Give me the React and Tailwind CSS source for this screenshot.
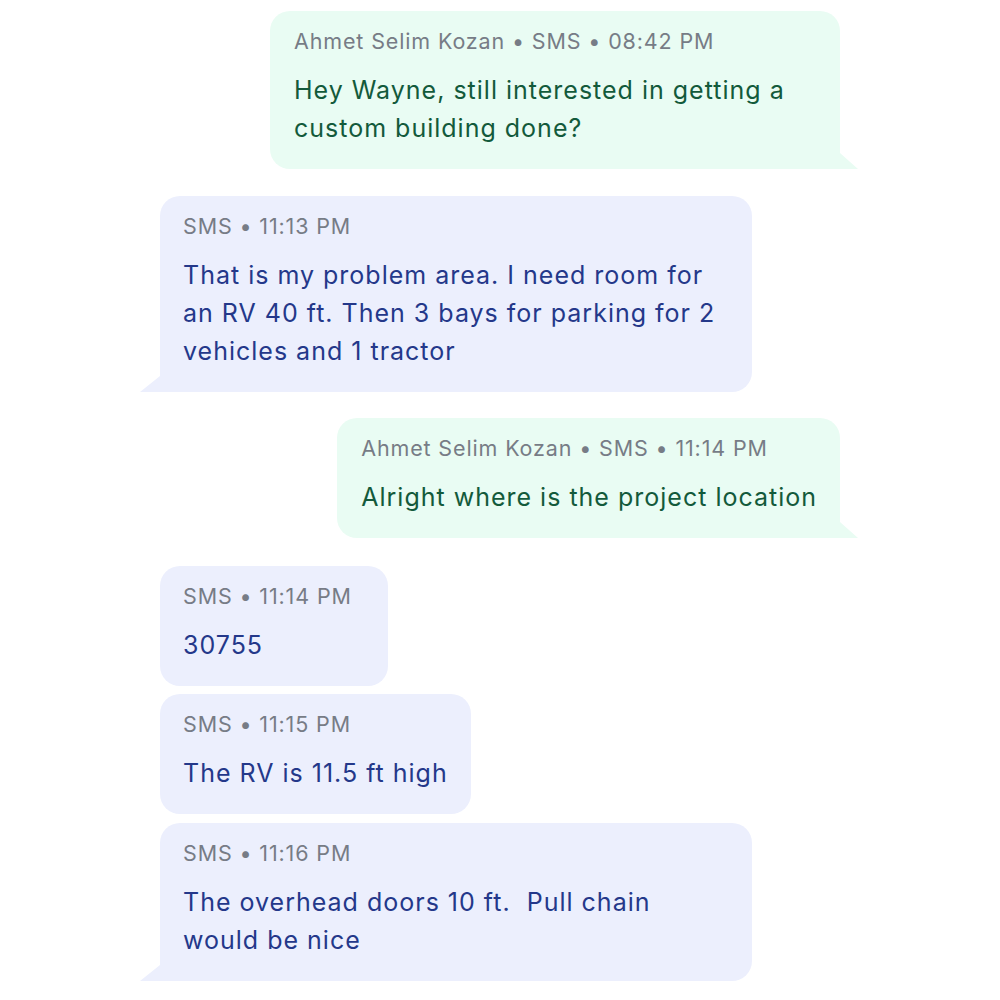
import React from 'react';

const messages = [
  { id: 1, out: true, meta: 'Ahmet Selim Kozan • SMS • 08:42 PM', text: 'Hey Wayne, still interested in getting a custom building done?', tail: true },
  { id: 2, out: false, meta: 'SMS • 11:13 PM', text: 'That is my problem area. I need room for an RV 40 ft. Then 3 bays for parking for 2 vehicles and 1 tractor', tail: true },
  { id: 3, out: true, meta: 'Ahmet Selim Kozan • SMS • 11:14 PM', text: 'Alright where is the project location', tail: true },
  { id: 4, out: false, meta: 'SMS • 11:14 PM', text: '30755', tail: false },
  { id: 5, out: false, meta: 'SMS • 11:15 PM', text: 'The RV is 11.5 ft high', tail: false },
  { id: 6, out: false, meta: 'SMS • 11:16 PM', text: 'The overhead doors 10 ft.\u00a0 Pull chain would be nice', tail: true },
];

const Bubble = ({ msg }) => {
  if (msg.out) {
    return (
      <div className="relative ml-auto w-fit min-w-[228px] max-w-[570px]">
        <div className="rounded-[20px] rounded-br-none bg-[#e9fcf3] pl-[24px] pr-[23px] pt-[16px] pb-[22px]">
          <div className="text-[21.5px] leading-[28px] tracking-[0.04em] text-[#777c86]">{msg.meta}</div>
          <div className="mt-[16px] text-[25px] leading-[38px] tracking-[0.04em] text-[#135a3b]">{msg.text}</div>
        </div>
        {msg.tail && (
          <svg className="absolute bottom-0 -right-[18px]" width="18" height="16" viewBox="0 0 18 16">
            <path d="M0 0 L18 16 L0 16 Z" fill="#e9fcf3" />
          </svg>
        )}
      </div>
    );
  }
  return (
    <div className="relative w-fit min-w-[228px] max-w-[592px]">
      <div className={`rounded-[20px] ${msg.tail ? 'rounded-bl-none' : ''} bg-[#eceffd] px-[23px] pt-[16px] pb-[22px]`}>
        <div className="text-[21.5px] leading-[28px] tracking-[0.04em] text-[#777c86]">{msg.meta}</div>
        <div className="mt-[16px] text-[25px] leading-[38px] tracking-[0.04em] text-[#24388a]">{msg.text}</div>
      </div>
      {msg.tail && (
        <svg className="absolute bottom-0 -left-[20px]" width="20" height="16" viewBox="0 0 20 16">
          <path d="M20 0 L0 16 L20 16 Z" fill="#eceffd" />
        </svg>
      )}
    </div>
  );
};

export default function App() {
  return (
    <div className="min-h-screen bg-white font-['Inter',sans-serif]">
      <div className="mx-auto w-[680px] pt-[11px] flex flex-col">
        <Bubble msg={messages[0]} />
        <div className="mt-[27px]"><Bubble msg={messages[1]} /></div>
        <div className="mt-[26px]"><Bubble msg={messages[2]} /></div>
        <div className="mt-[28px] flex flex-col">
          <Bubble msg={messages[3]} />
          <div className="mt-[8px]"><Bubble msg={messages[4]} /></div>
          <div className="mt-[9px]"><Bubble msg={messages[5]} /></div>
        </div>
      </div>
    </div>
  );
}
